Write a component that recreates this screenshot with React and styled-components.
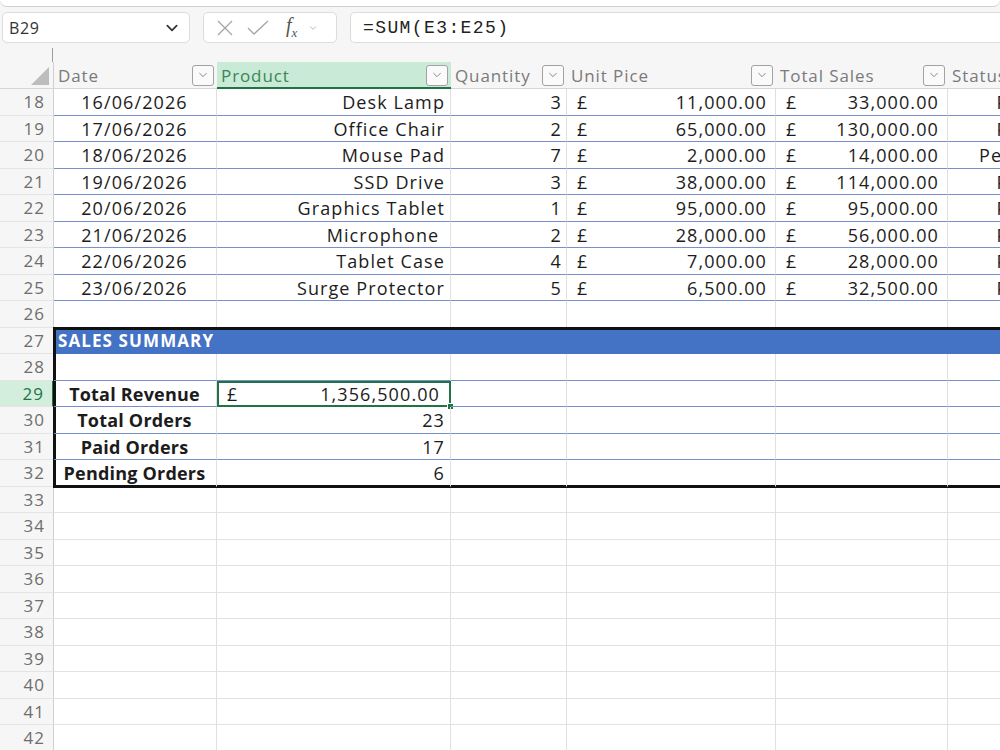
import React from 'react'
import styled, { createGlobalStyle } from 'styled-components'

const COLS = [163, 234, 116, 209, 172, 140]
const ROW_H = 26.5
const GREEN = '#217346'
const BLUE_LINE = '#7590cc'

const GlobalStyle = createGlobalStyle`
    html, body {
        margin: 0;
        padding: 0;
        background: #fff;
        overflow: hidden;
    }
    * {
        box-sizing: border-box;
    }
`

const Page = styled.div`
    width: 1000px;
    height: 750px;
    overflow: hidden;
    background: #f6f6f6;
    font-family: "Open Sans", "Noto Sans", sans-serif;
    color: #1c1c1c;
`

const TopStrip = styled.div`
    height: 7px;
    background: #fff;
    border-bottom: 1px solid #cfcfcf;
    border-radius: 0 0 10px 10px;
`

const FormulaBar = styled.div`
    display: flex;
    align-items: center;
    gap: 13px;
    padding: 5px 0 0 2px;
    height: 36px;
`

const Box = styled.div`
    height: 31px;
    background: #fff;
    border: 1px solid #dcdcdc;
    border-radius: 5px;
    display: flex;
    align-items: center;
`

const NameBox = styled(Box)`
    width: 188px;
    justify-content: space-between;
    padding: 0 10px 0 6px;
    font-size: 16px;
    letter-spacing: 0.6px;
    color: #333;
`

const FxGroup = styled(Box)`
    width: 134px;
    gap: 12px;
    padding: 0 8px 0 12px;
`

const FxText = styled.span`
    font-family: "Liberation Serif", serif;
    font-style: italic;
    font-size: 20px;
    color: #555;
    margin-left: 4px;

    sub {
        font-size: 13px;
    }
`

const FormulaInput = styled(Box)`
    flex: 1;
    border-radius: 5px 0 0 5px;
    border-right: none;
    padding-left: 12px;
    font-family: "Liberation Mono", "DejaVu Sans Mono", monospace;
    font-size: 18px;
    letter-spacing: 1.4px;
    color: #222;
`

const SplitRow = styled.div`
    height: 19px;
    padding: 5px 0 0 52px;
`

const SplitLine = styled.div`
    width: 1px;
    height: 100%;
    background: #9c9c9c;
`

const HeaderRow = styled.div`
    display: flex;
    height: 27px;
    width: 1088px;
    border-bottom: 1px solid #d6d6d6;
`

const Corner = styled.div`
    width: 54px;
    flex: none;
    display: flex;
    align-items: flex-end;
    justify-content: flex-end;
    padding: 0 4px 3px 0;
    border-right: 1px solid #d0d0d0;
`

const HeadCell = styled.div`
    width: ${p => p.$w}px;
    flex: none;
    display: flex;
    align-items: center;
    justify-content: space-between;
    padding: 1px 3px 0 4px;
    font-size: 17px;
    letter-spacing: 0.9px;
    color: ${p => (p.$active ? '#3b8656' : '#7a7a7a')};
    background: ${p => (p.$active ? '#c9ead6' : 'transparent')};
    border-bottom: 2px solid ${p => (p.$active ? GREEN : 'transparent')};
    margin-bottom: -1px;
`

const FilterBtn = styled.div`
    width: 22px;
    height: 21px;
    border: 1px solid #a2a2a2;
    border-radius: 3px;
    background: #fafafa;
    display: flex;
    align-items: center;
    justify-content: center;
`

const Body = styled.div`
    display: flex;
    width: 1088px;
`

const RowHeads = styled.div`
    width: 54px;
    flex: none;
    display: flex;
    flex-direction: column;
`

const RowNum = styled.div`
    height: ${ROW_H}px;
    display: flex;
    align-items: center;
    justify-content: flex-end;
    padding-right: 8px;
    font-size: 17px;
    letter-spacing: 1px;
    color: ${p => (p.$active ? GREEN : '#6e6e6e')};
    background: ${p => (p.$active ? '#d3eedd' : '#f6f6f6')};
    border-bottom: 1px solid #e4e4e4;
    border-right: ${p => (p.$active ? `2px solid ${GREEN}` : '1px solid #d0d0d0')};
`

const Sheet = styled.div`
    display: flex;
    flex-direction: column;
    background: #fff;
    flex: 1;
`

const Row = styled.div`
    display: flex;
    height: ${ROW_H}px;
    background: ${p => (p.$band ? '#4472c4' : '#fff')};
`

const lineColor = {
    blue: BLUE_LINE,
    grid: '#e2e2e2',
    none: 'transparent',
}

const Cell = styled.div`
    position: relative;
    width: ${p => p.$w}px;
    flex: none;
    display: flex;
    align-items: center;
    justify-content: ${p => p.$align || 'flex-start'};
    gap: 4px;
    padding: 1px ${p => (p.$pr ?? 5)}px 0 ${p => (p.$pl ?? 4)}px;
    font-size: 18px;
    letter-spacing: ${p => (p.$bold ? '0.2px' : '1.1px')};
    font-weight: ${p => (p.$bold ? 700 : 400)};
    white-space: nowrap;
    overflow: hidden;
    border-right: 1px solid ${p => (p.$band ? 'transparent' : '#e0e0e0')};
    border-bottom: 1px solid ${p => lineColor[p.$line || 'grid']};
`

const BandTitle = styled.span`
    color: #fff;
    font-weight: 700;
    font-size: 17px;
    letter-spacing: 1.1px;
    padding-left: 2px;
`

const SummaryBox = styled.div`
    display: flex;
    flex-direction: column;
    outline: 3px solid #111;
    outline-offset: -2px;
    position: relative;
    z-index: 1;
`

const Selected = styled(Cell)`
    overflow: visible;
    outline: 2px solid ${GREEN};
    outline-offset: -2px;
    padding-right: 10px;
`

const Handle = styled.span`
    position: absolute;
    right: -4px;
    bottom: -4px;
    width: 7px;
    height: 7px;
    background: ${GREEN};
    border: 1px solid #fff;
`

const Chevron = ({ size = 12, color = '#333', width = 1.6 }) => (
    <svg width={size} height={size} viewBox="0 0 12 12" fill="none">
        <polyline points="2,4 6,8 10,4" stroke={color} strokeWidth={width} strokeLinecap="round" strokeLinejoin="round" />
    </svg>
)

const Accounting = ({ w, value, line, pr = 8 }) => (
    <Cell $w={w} $align="space-between" $pl={10} $pr={pr} $line={line}>
        <span>£</span>
        <span>{value}</span>
    </Cell>
)

const headers = ['Date', 'Product', 'Quantity', 'Unit Pice', 'Total Sales', 'Status']

const orders = [
    [18, '16/06/2026', 'Desk Lamp', 3, '11,000.00', '33,000.00', 'Paid'],
    [19, '17/06/2026', 'Office Chair', 2, '65,000.00', '130,000.00', 'Paid'],
    [20, '18/06/2026', 'Mouse Pad', 7, '2,000.00', '14,000.00', 'Pending'],
    [21, '19/06/2026', 'SSD Drive', 3, '38,000.00', '114,000.00', 'Paid'],
    [22, '20/06/2026', 'Graphics Tablet', 1, '95,000.00', '95,000.00', 'Paid'],
    [23, '21/06/2026', 'Microphone\u00a0', 2, '28,000.00', '56,000.00', 'Paid'],
    [24, '22/06/2026', 'Tablet Case', 4, '7,000.00', '28,000.00', 'Paid'],
    [25, '23/06/2026', 'Surge Protector', 5, '6,500.00', '32,500.00', 'Paid'],
]

const summary = [
    [30, 'Total Orders', '23', 'blue'],
    [31, 'Paid Orders', '17', 'blue'],
    [32, 'Pending Orders', '6', 'none'],
]

const rowNumbers = Array.from({ length: 25 }, (_, i) => 18 + i)

const EmptyCells = ({ from = 0, line = 'grid' }) =>
    COLS.slice(from).map((w, i) => <Cell key={i} $w={w} $line={line} />)

export default function App() {
    return (
        <Page>
            <GlobalStyle />
            <TopStrip />
            <FormulaBar>
                <NameBox>
                    <span>B29</span>
                    <Chevron size={14} color="#333" width={1.5} />
                </NameBox>
                <FxGroup>
                    <svg width="18" height="18" viewBox="0 0 18 18">
                        <path d="M2 2 L16 16 M16 2 L2 16" stroke="#a6a6a6" strokeWidth="1.3" />
                    </svg>
                    <svg width="24" height="18" viewBox="0 0 24 18" fill="none">
                        <polyline points="2,9 8,15 22,2" stroke="#a6a6a6" strokeWidth="1.3" />
                    </svg>
                    <FxText>f<sub>x</sub></FxText>
                    <Chevron size={8} color="#aaa" width={1.2} />
                </FxGroup>
                <FormulaInput>=SUM(E3:E25)</FormulaInput>
            </FormulaBar>
            <SplitRow>
                <SplitLine />
            </SplitRow>
            <HeaderRow>
                <Corner>
                    <svg width="18" height="18" viewBox="0 0 18 18">
                        <polygon points="18,0 18,18 0,18" fill="#bdbdbd" />
                    </svg>
                </Corner>
                {headers.map((h, i) => (
                    <HeadCell key={h} $w={COLS[i]} $active={i === 1}>
                        <span>{h}</span>
                        {i < 5 && (
                            <FilterBtn>
                                <Chevron size={10} color="#8a8a8a" width={1.2} />
                            </FilterBtn>
                        )}
                    </HeadCell>
                ))}
            </HeaderRow>
            <Body>
                <RowHeads>
                    {rowNumbers.map(n => (
                        <RowNum key={n} $active={n === 29}>{n}</RowNum>
                    ))}
                </RowHeads>
                <Sheet>
                    {orders.map(([n, date, product, qty, unit, total, status]) => (
                        <Row key={n}>
                            <Cell $w={COLS[0]} $align="center" $line="blue">{date}</Cell>
                            <Cell $w={COLS[1]} $align="flex-end" $line="blue">{product}</Cell>
                            <Cell $w={COLS[2]} $align="flex-end" $pr={4} $line="blue">{qty}</Cell>
                            <Accounting w={COLS[3]} value={unit} line="blue" />
                            <Accounting w={COLS[4]} value={total} line="blue" />
                            <Cell $w={COLS[5]} $align="center" $line="blue">{status}</Cell>
                        </Row>
                    ))}
                    <Row>
                        <EmptyCells />
                    </Row>
                    <SummaryBox>
                        <Row $band>
                            <Cell $w={1034} $band $line="none" $pl={2}>
                                <BandTitle>SALES SUMMARY</BandTitle>
                            </Cell>
                        </Row>
                        <Row>
                            <EmptyCells line="blue" />
                        </Row>
                        <Row>
                            <Cell $w={COLS[0]} $align="center" $bold $line="blue">Total Revenue</Cell>
                            <Selected $w={COLS[1]} $align="space-between" $pl={10} $line="blue">
                                <span>£</span>
                                <span>1,356,500.00</span>
                                <Handle />
                            </Selected>
                            <EmptyCells from={2} line="blue" />
                        </Row>
                        {summary.map(([n, label, value, line]) => (
                            <Row key={n}>
                                <Cell $w={COLS[0]} $align="center" $bold $line={line}>{label}</Cell>
                                <Cell $w={COLS[1]} $align="flex-end" $line={line}>{value}</Cell>
                                <EmptyCells from={2} line={line} />
                            </Row>
                        ))}
                    </SummaryBox>
                    {rowNumbers.slice(15).map(n => (
                        <Row key={n}>
                            <EmptyCells />
                        </Row>
                    ))}
                </Sheet>
            </Body>
        </Page>
    )
}
